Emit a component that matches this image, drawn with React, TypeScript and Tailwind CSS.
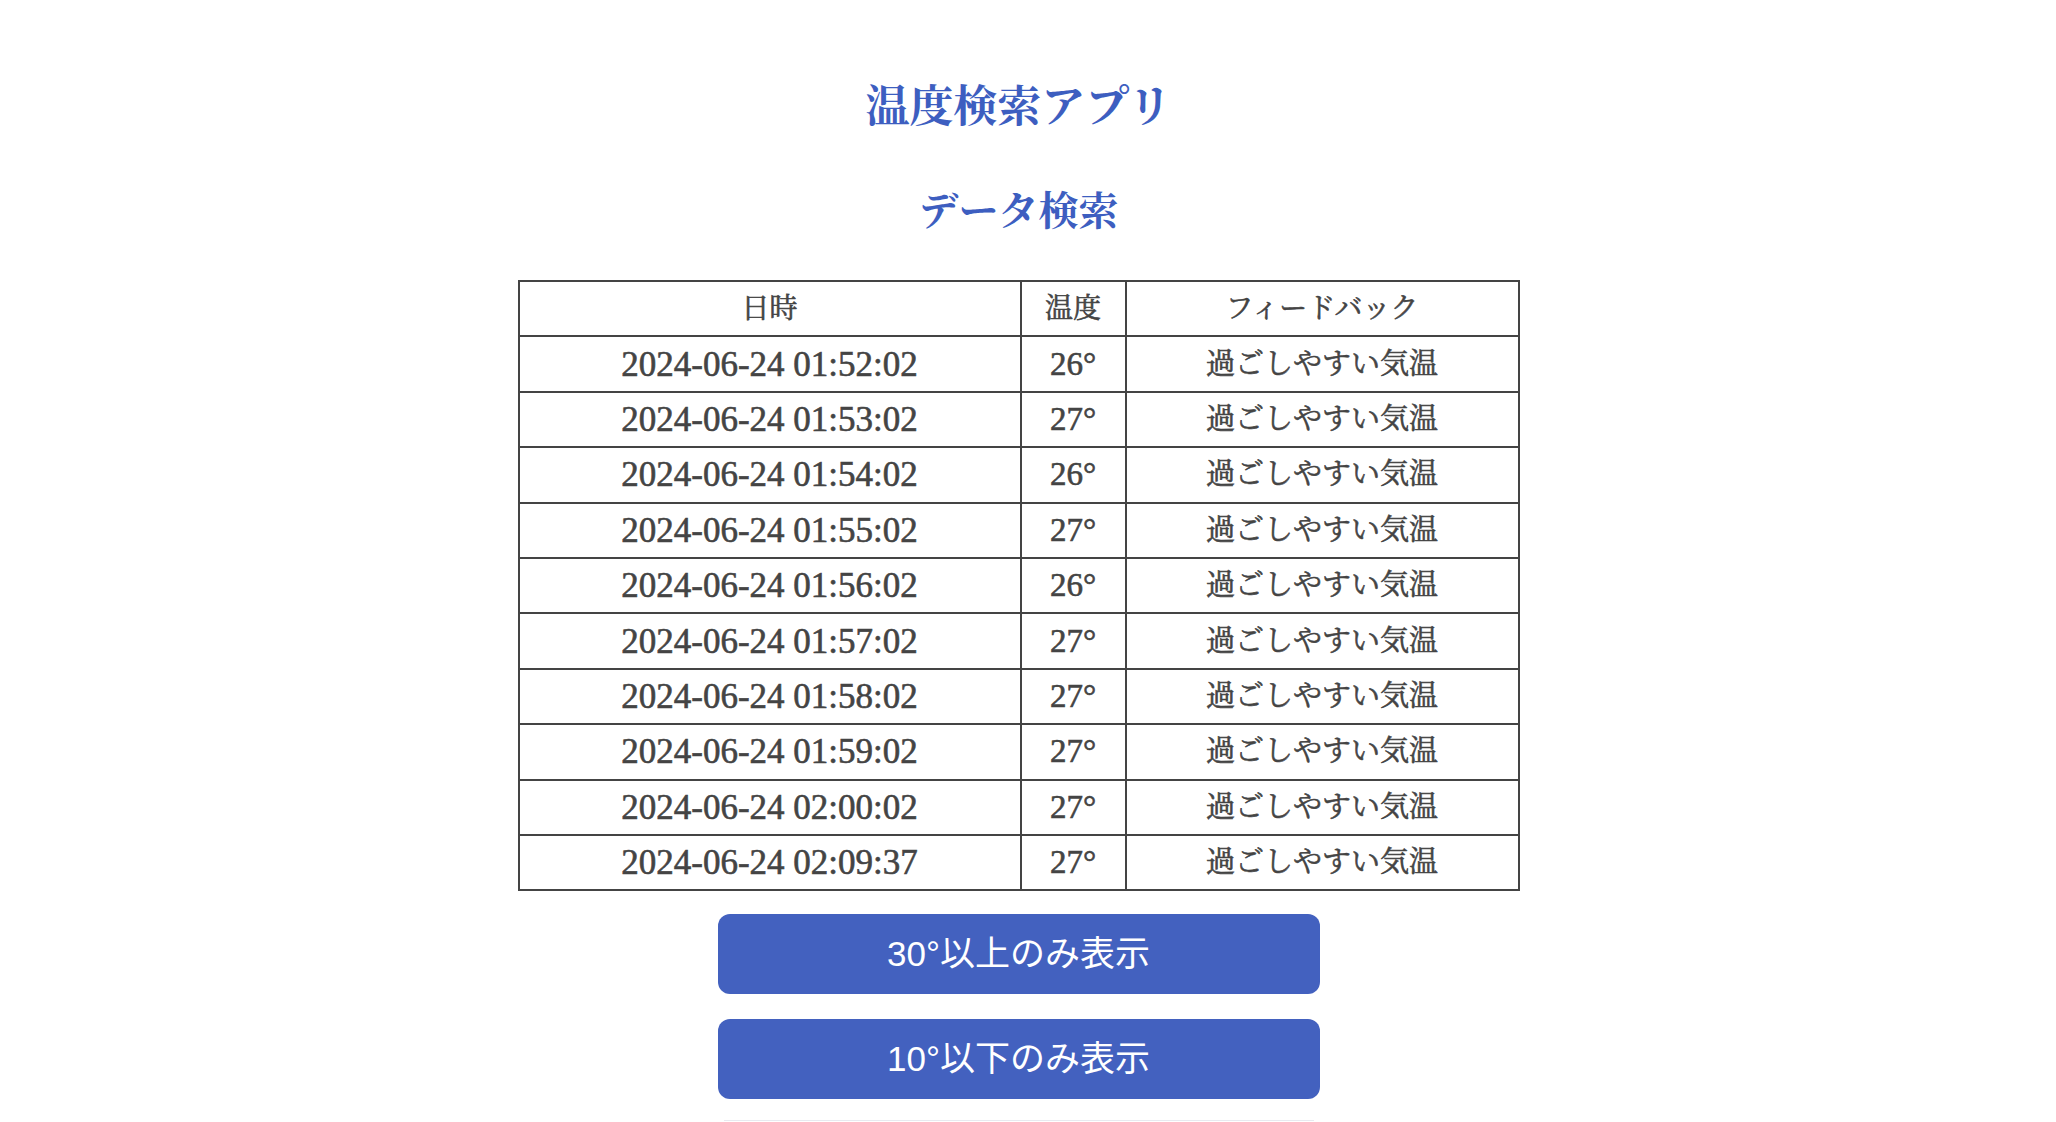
import React from "react";

const rows = [
  { time: "2024-06-24 01:52:02", temp: 26 },
  { time: "2024-06-24 01:53:02", temp: 27 },
  { time: "2024-06-24 01:54:02", temp: 26 },
  { time: "2024-06-24 01:55:02", temp: 27 },
  { time: "2024-06-24 01:56:02", temp: 26 },
  { time: "2024-06-24 01:57:02", temp: 27 },
  { time: "2024-06-24 01:58:02", temp: 27 },
  { time: "2024-06-24 01:59:02", temp: 27 },
  { time: "2024-06-24 02:00:02", temp: 27 },
  { time: "2024-06-24 02:09:37", temp: 27 },
];

const serif =
  "font-['Liberation_Serif','Noto_Serif_CJK_JP','Noto_Sans_CJK_JP',serif]";

const cell = "border-2 border-[#444] [-webkit-text-stroke:0.6px_#444]";

const App = () => {
  return (
    <div className="min-h-[1122px] bg-white flex flex-col items-center pr-[19px] pt-[80px] overflow-hidden">
      <h1
        className={`${serif} text-[44px] leading-[56px] font-bold text-[#3d5ec0]`}
      >
        温度検索アプリ
      </h1>
      <h2
        className={`${serif} mt-[50px] text-[40px] leading-[52px] font-bold text-[#3d5ec0]`}
      >
        データ検索
      </h2>

      {/* table */}
      <table
        className={`${serif} mt-[42px] w-[1002px] border-collapse border-2 border-[#444] text-[#444] text-center`}
      >
        <thead>
          <tr className="h-[55.4px]">
            <th className={`w-[502px] ${cell} text-[28px] font-normal`}>
              日時
            </th>
            <th className={`w-[105px] ${cell} text-[28px] font-normal`}>
              温度
            </th>
            <th className={`${cell} text-[28px] font-normal`}>
              フィードバック
            </th>
          </tr>
        </thead>
        <tbody>
          {rows.map((r, i) => (
            <tr key={i} className="h-[55.4px]">
              <td className={`${cell} text-[35px] leading-none`}>{r.time}</td>
              <td className={`${cell} text-[33px] leading-none`}>
                {r.temp}°
              </td>
              <td className={`${cell} text-[29px] leading-none`}>
                過ごしやすい気温
              </td>
            </tr>
          ))}
        </tbody>
      </table>

      {/* filter buttons */}
      <div className="mt-[23px] flex flex-col items-center gap-[25px]">
        <button className="w-[602px] h-[80px] rounded-[12px] bg-[#4361bf] text-white text-[35px] font-['Liberation_Sans','Noto_Sans_CJK_JP',sans-serif]">
          30°以上のみ表示
        </button>
        <button className="w-[602px] h-[80px] rounded-[12px] bg-[#4361bf] text-white text-[35px] font-['Liberation_Sans','Noto_Sans_CJK_JP',sans-serif]">
          10°以下のみ表示
        </button>
        <div className="w-[590px] h-[20px] border-t border-[#e8eaf0] -mt-[4px]" />
      </div>
    </div>
  );
};

export default App;
